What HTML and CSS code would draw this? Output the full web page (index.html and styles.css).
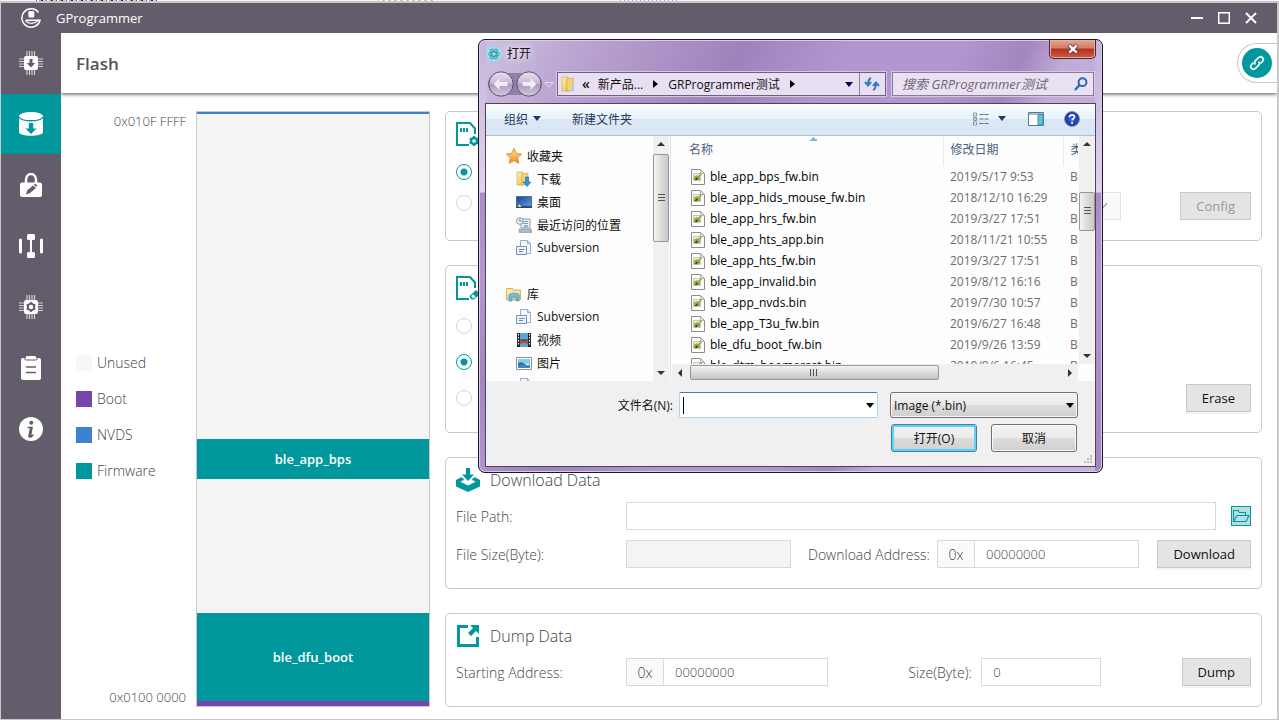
FILE: index.html
```html
<!DOCTYPE html>
<html lang="en">
<head>
<meta charset="utf-8">
<title>GProgrammer</title>
<link rel="stylesheet" href="styles.css">
</head>
<body>
<svg class="defs" aria-hidden="true">
  <defs>
    <linearGradient id="g-folder" x1="0" x2="1" y1="0" y2="1"><stop offset="0" stop-color="#fff3b8"/><stop offset="1" stop-color="#e6bd4c"/></linearGradient>
    <linearGradient id="g-blue" x1="0" x2="1" y1="0" y2="1"><stop offset="0" stop-color="#1c3f94"/><stop offset="1" stop-color="#5aa5ea"/></linearGradient>
    <linearGradient id="g-star" x1="0" x2="0" y1="0" y2="1"><stop offset="0" stop-color="#ffe79a"/><stop offset="1" stop-color="#f58a1f"/></linearGradient>
    <linearGradient id="g-orb" x1="0" x2="0" y1="0" y2="1"><stop offset="0" stop-color="#e9e2f0"/><stop offset=".5" stop-color="#c3b5d3"/><stop offset=".52" stop-color="#a99bbd"/><stop offset="1" stop-color="#d5cbe0"/></linearGradient>
    <radialGradient id="g-help"><stop offset="0" stop-color="#3f6be0"/><stop offset="1" stop-color="#16309c"/></radialGradient>
  </defs>
  <symbol id="i-file" viewBox="0 0 14 16"><path d="M.5.5h9l4 4v11H.5z" fill="#fdfdfd" stroke="#8d8d8d"/><path d="M9.500 1v3.500h3.500" fill="#e8e8e8" stroke="#a5a5a5" stroke-width=".8"/><path d="M2.500 4.500h7v7h-7z" fill="#eef2dc" stroke="#b5bda8" stroke-width=".8"/><path d="M3 7.500l3-1.500 3 2v3H3z" fill="#79c043"/><path d="M6 9.500l4.500-5" stroke="#c98a35" stroke-width="1.600"/><path d="M4.500 11l1.800-2" stroke="#333" stroke-width="1.500"/></symbol>
  <symbol id="i-svn" viewBox="0 0 16 16"><path d="M4.500.5h7l3 3v10h-10z" fill="#f4f8fd" stroke="#93add0"/><path d="M11.500.5v3h3" fill="none" stroke="#93add0"/><path d="M.5 6.500h10v8H.5z" fill="#edf3fb" stroke="#7890ba"/><path d="M3 9.500h5.500M3 11.500h4" stroke="#6c86b6"/></symbol>
  <symbol id="i-chip" viewBox="0 0 24 24"><path d="M8 0v24M10.500 0v24M13 0v24M15.500 0v24M0 8h24M0 10.500h24M0 13h24M0 15.500h24" stroke="#d2d0d5" stroke-width="1.200"/><rect x="5" y="5" width="14" height="14" rx="2" fill="#fff"/></symbol>
  <symbol id="i-card" viewBox="0 0 24 24"><path d="M13 23H1V1h13l5 5.500V12" fill="none" stroke="#00989d" stroke-width="2"/><path d="M5 6v4M8 6v4M11 6v4" stroke="#00989d" stroke-width="2"/></symbol>
</svg>

<div class="backdrop"></div>
<div class="app">
  <header class="titlebar">
    <svg class="logo" viewBox="0 0 20 20" fill="none" stroke="#fff"><path d="M17.500 4.500A9.200 9.200 0 1 0 19 12.300H5" stroke-width="1.500"/><path d="M4.500 12c1.500 4 9 4.500 12.500.6" stroke-width="1.200"/><rect x="7.300" y="3" width="6" height="6.500" rx="1.500" fill="#fff" stroke="none"/><circle cx="14.800" cy="1.800" r=".7" fill="#fff" stroke="none"/></svg>
    <h1 class="app-name">GProgrammer</h1>
    <div class="window-buttons">
      <button aria-label="Minimize"><svg viewBox="0 0 12 12"><path d="M0 6h12" stroke="#fff" stroke-width="2"/></svg></button>
      <button aria-label="Maximize"><svg viewBox="0 0 12 12"><path d="M.7.7h10.600v10.600H.7z" fill="none" stroke="#fff" stroke-width="1.500"/></svg></button>
      <button aria-label="Close"><svg viewBox="0 0 12 12"><path d="M1 1l10 10M11 1L1 11" stroke="#fff" stroke-width="2"/></svg></button>
    </div>
  </header>

  <div class="shell">
    <nav class="sidebar" aria-label="Tools">
      <button class="side-item" aria-label="Device"><svg viewBox="0 0 24 24"><use href="#i-chip"/><path d="M10.500 8h3v4h2.800L12 16.500 7.700 12h2.800z" fill="#635d6b"/></svg></button>
      <button class="side-item active" aria-label="Flash"><svg viewBox="0 0 24 24"><path d="M0 4v16c0 5 24 5 24 0V4z" fill="#fff"/><ellipse cx="12" cy="4.500" rx="12" ry="4.500" fill="#fff"/><path d="M0 5c2 5 22 5 24 0" fill="none" stroke="#00989d" stroke-width="1.300"/><path d="M9.800 11h4.400v5.500h3.300L12 22l-5.500-5.500h3.300z" fill="#00989d"/></svg></button>
      <button class="side-item" aria-label="Encrypt"><svg viewBox="0 0 24 24"><path d="M7 11V7c0-8 10-8 10 0v4" fill="none" stroke="#fff" stroke-width="2.500"/><rect x="1" y="9.500" width="22" height="14.500" rx="2" fill="#fff"/><path d="M7 21.500l1-4 6-5 3 2.500-6 5zM14.800 11.800l1.500-1 2 1.800-1 1.500z" fill="#635d6b"/></svg></button>
      <button class="side-item" aria-label="eFuse"><svg viewBox="0 0 24 24"><path d="M1.500 6v12M22.500 6v12" stroke="#fff" stroke-width="3" stroke-linecap="round"/><path d="M12 3v18" stroke="#fff" stroke-width="2"/><rect x="8" width="8" height="6" rx="1.500" fill="#fff"/><rect x="8" y="18" width="8" height="6" rx="1.500" fill="#fff"/></svg></button>
      <button class="side-item" aria-label="Chip configuration"><svg viewBox="0 0 24 24"><use href="#i-chip"/><circle cx="12" cy="12" r="3.200" fill="none" stroke="#635d6b" stroke-width="2"/><path d="M12 7v2M12 15v2M7.700 9.500l1.500 1M14.800 13.500l1.500 1M7.700 14.500l1.500-1M14.800 10.500l1.500-1" stroke="#635d6b" stroke-width="1.800"/></svg></button>
      <button class="side-item" aria-label="Log"><svg viewBox="0 0 24 24"><rect x="2" y="2" width="20" height="22" rx="2" fill="#fff"/><path d="M5.500 1v1.500q0 1.500 2 1.500h9q2 0 2-1.500V1" fill="none" stroke="#635d6b"/><rect x="7" width="10" height="3" rx="1" fill="#fff"/><path d="M7 11h10M7 16.500h10" stroke="#635d6b" stroke-width="1.700"/></svg></button>
      <button class="side-item" aria-label="About"><svg viewBox="0 0 24 24"><circle cx="12" cy="12" r="12" fill="#fff"/><circle cx="12.300" cy="5.800" r="2" fill="#635d6b"/><path d="M8.500 10.500h4.500l-1.500 8q.5 1 3-.8" fill="none" stroke="#635d6b" stroke-width="1.500"/><path d="M12.200 10.500L10.500 19q1 1 2.500-.3" fill="none" stroke="#635d6b" stroke-width="2.500"/></svg></button>
    </nav>

    <div class="workspace">
      <div class="page-head">
        <h2 class="page-title">Flash</h2>
        <div class="connect-tab"><button class="connect" aria-label="Connect"><svg viewBox="0 0 16 16" fill="none" stroke="#fff" stroke-width="1.700"><path d="M6.500 9.500c-1.500-1.500-1-3 .2-4.200L9.500 2.700c3-2.500 6.500 1 3.800 3.900L11.500 8.400"/><path d="M9.500 6.500c1.500 1.500 1 3-.2 4.200l-2.800 2.600c-3 2.500-6.500-1-3.800-3.900l1.800-1.800"/></svg></button></div>
      </div>

      <main class="content">
        <section class="legend-col" aria-label="Memory legend">
          <div class="addr">0x010F FFFF</div>
          <ul class="legend">
            <li><i class="swatch unused"></i>Unused</li>
            <li><i class="swatch boot"></i>Boot</li>
            <li><i class="swatch nvds"></i>NVDS</li>
            <li><i class="swatch firmware"></i>Firmware</li>
          </ul>
          <div class="addr">0x0100 0000</div>
        </section>
        <section class="flash-map" aria-label="Flash layout">
          <div class="nvds seg-nvds"></div>
          <div class="seg-free-top"></div>
          <div class="firmware seg-app">ble_app_bps</div>
          <div class="seg-free"></div>
          <div class="firmware seg-boot">ble_dfu_boot</div>
          <div class="boot seg-info"></div>
        </section>

        <div class="panels">
          <section class="panel">
            <div class="panel-head"><svg class="panel-icon" viewBox="0 0 24 24"><use href="#i-card"/><circle cx="18" cy="19" r="3" fill="none" stroke="#00989d" stroke-width="2.400"/><path d="M18 14v2M18 22v2M13.700 16.500l1.800 1M20.500 20.500l1.800 1M13.700 21.500l1.800-1M20.500 17.500l1.800-1" stroke="#00989d" stroke-width="2.200"/></svg></div>
            <div class="option-body">
              <div class="radios tight"><input type="radio" name="flash" aria-label="Internal" checked><input type="radio" name="flash" aria-label="External"></div>
              <div class="option-actions"><span class="select-wrap"><select disabled aria-label="Pin group"></select><svg viewBox="0 0 12 8"><path d="M1 1l5 6 5-6" fill="none" stroke="#aaa" stroke-width="1.200"/></svg></span><button class="btn" disabled>Config</button></div>
            </div>
          </section>

          <section class="panel">
            <div class="panel-head"><svg class="panel-icon" viewBox="0 0 24 24"><use href="#i-card"/><path d="M14 19.500l6-5.500 4 4-6 5.500h-2.500L13.500 21z" fill="#00989d"/><path d="M15 20l2-1.800 2.500 2.500-2 2z" fill="#fff"/></svg></div>
            <div class="option-body">
              <div class="radios"><input type="radio" name="erase" aria-label="Custom"><input type="radio" name="erase" aria-label="Firmware" checked><input type="radio" name="erase" aria-label="All"></div>
              <div class="option-actions"><button class="btn">Erase</button></div>
            </div>
          </section>

          <section class="panel">
            <div class="panel-head"><svg class="panel-icon" viewBox="0 0 24 24"><path d="M10 0h4v6.500h4L12 13 6 6.500h4z" fill="#00989d"/><path d="M5.500 9L0 12v6.500L12 24l12-5.500V12l-5.500-3-2.800 2.800 4 1.900L12 17.500l-7.700-3.800 4-1.900z" fill="#00989d"/></svg><h3>Download Data</h3></div>
            <div class="row"><label class="label" for="path">File Path:</label><input id="path" class="field grow" type="text"><button class="browse" aria-label="Browse"><svg viewBox="0 0 18 18" fill="none" stroke="#00989d" stroke-width="1.100"><path d="M1.500 14.500v-11h4.500l1.500 2h6v3M1.500 14.500l3.500-6h12l-3 6z"/></svg></button></div>
            <div class="row"><label class="label" for="fsize">File Size(Byte):</label><input id="fsize" class="field size" type="text" disabled><label class="label2" for="daddr">Download Address:</label><span class="addon">0x</span><input id="daddr" class="field hex" type="text" value="00000000"><button class="btn push">Download</button></div>
          </section>

          <section class="panel">
            <div class="panel-head"><svg class="panel-icon" viewBox="0 0 24 24"><path d="M12 2.500H2.500v19h19V13" fill="none" stroke="#00989d" stroke-width="3"/><path d="M14 1h9v9l-3-3-5 5-3-3 5-5z" fill="#00989d"/></svg><h3>Dump Data</h3></div>
            <div class="row"><label class="label" for="saddr">Starting Address:</label><span class="addon">0x</span><input id="saddr" class="field hex" type="text" value="00000000"><label class="label3" for="dsize">Size(Byte):</label><input id="dsize" class="field short" type="text" value="0"><button class="btn push">Dump</button></div>
          </section>
        </div>
      </main>
    </div>
  </div>
</div>

<section class="dialog" role="dialog" aria-labelledby="dlg-title" lang="zh-CN">
  <div class="dlg-title">
    <svg viewBox="0 0 16 16"><circle cx="8" cy="8" r="8" fill="#8fe3ee"/><g fill="none" stroke="#3b7f92" stroke-width=".8"><ellipse cx="8" cy="8" rx="5.500" ry="2.200"/><ellipse cx="8" cy="8" rx="5.500" ry="2.200" transform="rotate(60 8 8)"/><ellipse cx="8" cy="8" rx="5.500" ry="2.200" transform="rotate(120 8 8)"/></g></svg>
    <h2 id="dlg-title">打开</h2>
    <button class="dlg-close" aria-label="关闭"><svg viewBox="0 0 12 10"><path d="M2 1l8 8M10 1L2 9" stroke="#4c3a46" stroke-width="4"/><path d="M2.300 1.300l7.400 7.400M9.700 1.300L2.300 8.700" stroke="#fff" stroke-width="2.400"/></svg></button>
  </div>
  <div class="dlg-nav">
    <svg class="orbs" viewBox="0 0 66 26"><rect x="0" y="2" width="54" height="22" rx="11" fill="#8f80a6"/><circle cx="13" cy="13" r="12.200" fill="url(#g-orb)" stroke="#5c5070"/><circle cx="41" cy="13" r="12.200" fill="url(#g-orb)" stroke="#5c5070"/><path d="M5.500 13l6-6v4h8v4h-8v4z" fill="#f0ebf5"/><path d="M48.500 13l-6-6v4h-8v4h8v4z" fill="#f0ebf5"/><path d="M57 11.500h8l-4 4.500z" fill="#b9a8cc" stroke="#efe8f6" stroke-width=".8"/></svg>
    <div class="address">
      <svg class="ico16" viewBox="0 0 16 16"><path d="M2 1h6v14H2z" fill="url(#g-folder)" stroke="#cfa63e" stroke-width=".6"/><path d="M7 3l6-1v12l-6 1.500z" fill="#f2d476" stroke="#c99d35" stroke-width=".6"/><path d="M12 9h2v6l-3 .5z" fill="#a9cbe6"/></svg>
      <span class="crumb-back">«</span><span>新产品...</span><i class="tri-right"></i><span>GRProgrammer测试</span><i class="tri-right"></i>
      <i class="tri-down navy"></i>
      <button class="refresh" aria-label="刷新"><svg class="ico16" viewBox="0 0 16 16" fill="none" stroke="#2e7ccc" stroke-width="2"><path d="M7 2Q4 3 4 9M1 6l3 3.500L7 6M9 14q3-1 3-7M9 10l3-3.500 3 3.500"/></svg></button>
    </div>
    <div class="search"><input type="text" aria-label="搜索" placeholder="搜索 GRProgrammer测试"><svg viewBox="0 0 14 14" fill="none" stroke="#2f66b4" stroke-width="2"><circle cx="8.500" cy="5.200" r="3.900"/><path d="M5.500 8L1 13" stroke-width="2.400"/></svg></div>
  </div>

  <div class="client">
    <div class="toolbar">
      <button class="tool">组织<i class="tri-down"></i></button>
      <button class="tool">新建文件夹</button>
      <span class="tool-icons">
        <button aria-label="视图"><svg class="ico16" viewBox="0 0 16 14"><path d="M.5 1h3v3h-3zM.5 5.500h3v3h-3zM.5 10h3v3h-3z" fill="#eef3f8" stroke="#8795a8"/><path d="M6.500 2.500h4M11.500 2.500h4M6.500 7h4M11.500 7h4M6.500 11.500h4M11.500 11.500h4" stroke="#5b6f8c"/><path d="M1.500 7h1" stroke="#c33"/></svg></button>
        <button aria-label="更多选项"><i class="tri-down"></i></button>
        <button aria-label="预览窗格"><svg class="ico16" viewBox="0 0 16 14"><path d="M.5.5h15v13H.5z" fill="#fff" stroke="#56789c"/><path d="M1 2h14" stroke="#56789c"/><path d="M10 2.500h5V13h-5z" fill="#62c0da" stroke="#3c8fae"/></svg></button>
        <button aria-label="帮助"><svg class="ico16" viewBox="0 0 16 16"><circle cx="8" cy="8" r="7.500" fill="url(#g-help)" stroke="#8f97a8"/><path d="M5.500 6.200C5.500 3 10.800 3.200 10.500 6c-.2 1.500-2.400 1.800-2.400 3.600M8.100 11v1.800" fill="none" stroke="#fff" stroke-width="1.800"/></svg></button>
      </span>
    </div>

    <div class="panes">
      <ul class="tree">
        <li><svg viewBox="0 0 16 16"><path d="M8 .5l2.300 5 5.200.6-3.900 3.700 1.100 5.500L8 12.500l-4.700 2.800 1.100-5.500L.5 6.100l5.200-.6z" fill="url(#g-star)" stroke="#d9791a" stroke-width=".8"/></svg>收藏夹</li>
        <li class="sub"><svg viewBox="0 0 16 16"><path d="M1 1h6v13H1z" fill="url(#g-folder)" stroke="#cfa63e" stroke-width=".6"/><path d="M6 3l6-1v11l-6 1.500z" fill="#f2d476" stroke="#c99d35" stroke-width=".6"/><path d="M9.500 6h3v5H15l-4 4.500L7 11h2.500z" fill="#2f95dc" stroke="#1b65a5" stroke-width=".6"/></svg>下载</li>
        <li class="sub"><svg viewBox="0 0 16 16"><path d="M.5 2.500h15v11H.5z" fill="url(#g-blue)" stroke="#4d6d9d"/><path d="M0 12h16v2H0z" fill="#274878"/><path d="M1.500 13l2-3 2 3z" fill="#ffd34c"/></svg>桌面</li>
        <li class="sub"><svg viewBox="0 0 16 16"><path d="M5 2h9v9H5z" fill="#e9eff3" stroke="#8fa0ac"/><path d="M7 4.500h5M7 6.500h5" stroke="#6da9c9"/><path d="M8 8h4v3H8z" fill="#7cc0dc"/><path d="M3 12h12l1 3.500H3z" fill="#aeb9c0" stroke="#82909a" stroke-width=".6"/><circle cx="3.800" cy="4" r="3.300" fill="#f7f7f7" stroke="#8b9298"/><path d="M3.800 2v2.200h1.700" fill="none" stroke="#555" stroke-width=".8"/></svg>最近访问的位置</li>
        <li class="sub"><svg viewBox="0 0 16 16"><use href="#i-svn"/></svg>Subversion</li>
        <li class="gap" aria-hidden="true"></li>
        <li><svg viewBox="0 0 16 16"><path d="M.5 2.500h6l1 1.500h7v10H.5z" fill="url(#g-folder)" stroke="#cfa63e" stroke-width=".8"/><path d="M3 9q5-5 10 0v6h-3v-4H6v4H3z" fill="#6dbbe6" stroke="#3c8cc0" stroke-width=".6"/><path d="M.5 6h14" stroke="#fff3b8"/></svg>库</li>
        <li class="sub"><svg viewBox="0 0 16 16"><use href="#i-svn"/></svg>Subversion</li>
        <li class="sub"><svg viewBox="0 0 16 16"><path d="M1 1h14v14H1z" fill="#222"/><path d="M4 1h8v14H4z" fill="#56a7da"/><path d="M4 9l4-2 4 2v3l-4-1-4 1z" fill="#bb4c39"/><path d="M4 8h8" stroke="#223a55"/><path d="M2.500 2v12M13.500 2v12" stroke="#fff" stroke-width="1.200" stroke-dasharray="1.500 1.500"/></svg>视频</li>
        <li class="sub"><svg viewBox="0 0 16 16"><path d="M.5 2.500h15v12H.5z" fill="#fff" stroke="#8b9297"/><path d="M2 4h12v5H2z" fill="#7fd0f2"/><path d="M2 8q4-2 7 1t5 0v4H2z" fill="#2c7d7c"/><path d="M2 11q6-2 12 0v2H2z" fill="#3f86c8"/></svg>图片</li>
        <li class="sub"><svg viewBox="0 0 16 16"><use href="#i-svn"/></svg></li>
      </ul>
      <div class="vbar tree-bar" aria-hidden="true"><i class="arrow up"></i><b class="thumb"></b><i class="arrow down"></i></div>

      <div class="list-area">
        <div class="list-main">
          <div class="file-scroll">
            <table class="files">
              <colgroup><col class="c-name"><col class="c-date"><col class="c-type"></colgroup>
              <thead><tr><th class="sorted">名称</th><th>修改日期</th><th>类型</th></tr></thead>
              <tbody>
                <tr><td><svg><use href="#i-file"/></svg>ble_app_bps_fw.bin</td><td>2019/5/17 9:53</td><td>BIN</td></tr>
                <tr><td><svg><use href="#i-file"/></svg>ble_app_hids_mouse_fw.bin</td><td>2018/12/10 16:29</td><td>BIN</td></tr>
                <tr><td><svg><use href="#i-file"/></svg>ble_app_hrs_fw.bin</td><td>2019/3/27 17:51</td><td>BIN</td></tr>
                <tr><td><svg><use href="#i-file"/></svg>ble_app_hts_app.bin</td><td>2018/11/21 10:55</td><td>BIN</td></tr>
                <tr><td><svg><use href="#i-file"/></svg>ble_app_hts_fw.bin</td><td>2019/3/27 17:51</td><td>BIN</td></tr>
                <tr><td><svg><use href="#i-file"/></svg>ble_app_invalid.bin</td><td>2019/8/12 16:16</td><td>BIN</td></tr>
                <tr><td><svg><use href="#i-file"/></svg>ble_app_nvds.bin</td><td>2019/7/30 10:57</td><td>BIN</td></tr>
                <tr><td><svg><use href="#i-file"/></svg>ble_app_T3u_fw.bin</td><td>2019/6/27 16:48</td><td>BIN</td></tr>
                <tr><td><svg><use href="#i-file"/></svg>ble_dfu_boot_fw.bin</td><td>2019/9/26 13:59</td><td>BIN</td></tr>
                <tr><td><svg><use href="#i-file"/></svg>ble_dtm_boomerast.bin</td><td>2019/8/6 16:45</td><td>BIN</td></tr>
              </tbody>
            </table>
          </div>
          <div class="vbar list-bar" aria-hidden="true"><i class="arrow up"></i><b class="thumb"></b><i class="arrow down"></i></div>
        </div>
        <div class="hbar" aria-hidden="true"><i class="arrow left"></i><b class="thumb"></b><i class="arrow right"></i></div>
      </div>
    </div>

    <div class="footer">
      <div class="footer-row">
        <label for="fname">文件名(N):</label>
        <span class="combo"><input id="fname" type="text"><i class="tri-down black"></i><i class="caret"></i></span>
        <span class="filter"><select aria-label="文件类型"><option>Image (*.bin)</option></select><i class="tri-down black"></i></span>
      </div>
      <div class="footer-row buttons"><button class="win-btn primary">打开(O)</button><button class="win-btn">取消</button></div>
      <svg class="grip" viewBox="0 0 8 8"><path d="M6 0h2v2H6zM3 3h2v2H3zM6 3h2v2H6zM0 6h2v2H0zM3 6h2v2H3zM6 6h2v2H6z" fill="#bbb"/></svg>
    </div>
  </div>
</section>
</body>
</html>
```
FILE: styles.css
```css
* { box-sizing: border-box; }
body { margin: 0; min-height: 100vh; display: flex; flex-direction: column; font-family: "Open Sans", "Noto Sans CJK SC", sans-serif; font-size: 13px; font-weight: 300; color: #444; background: #fff; }
h1, h2, h3, ul { margin: 0; padding: 0; font-weight: inherit; font-size: inherit; }
ul { list-style: none; }
button, input, select { font: inherit; color: inherit; margin: 0; border-radius: 0; }
button { padding: 0; border: 0; background: none; }
svg { display: block; flex: none; }
.defs { position: absolute; width: 0; height: 0; }

.backdrop { height: 1px; background: repeating-linear-gradient(90deg, #46618f 0 1px, #fff 1px 3px, #d9a25d 3px 5px, #332d52 5px 7px, #b8cfe8 7px 10px) 36px 0 / 121px 1px no-repeat, repeating-linear-gradient(90deg, #dfc290 0 1px, #fff 1px 4px, #dfc290 4px 6px) 378px 0 / 58px 1px no-repeat, repeating-linear-gradient(90deg, #8fa6cc 0 1px, #fff 1px 4px) 620px 0 / 60px 1px no-repeat, #f4f6f8; }
.app { flex: 1; display: flex; flex-direction: column; border: 1px solid #c8c8c8; border-width: 2px 2px 1px 1px; }

.titlebar { height: 30px; display: flex; align-items: center; padding: 0 20px; background: #635d6b; color: #fff; }
.logo { width: 20px; height: 20px; margin-right: 15px; }
.app-name { font-size: 13px; font-weight: 400; }
.window-buttons { margin-left: auto; display: flex; gap: 15px; }
.window-buttons svg { width: 12px; height: 12px; }

.shell { flex: 1; display: flex; }
.sidebar { width: 60px; background: #635d6b; display: flex; flex-direction: column; gap: 1px; }
.side-item { height: 60px; display: flex; align-items: center; justify-content: center; }
.side-item.active { background: #00989d; }
.side-item svg { width: 24px; height: 24px; }

.workspace { flex: 1; display: flex; flex-direction: column; }
.page-head { height: 60px; padding-left: 15px; display: flex; align-items: center; justify-content: space-between; box-shadow: 0 1px 4px rgba(0, 0, 0, .7); clip-path: inset(0 0 -8px 0); }
.page-title { font-size: 17px; font-weight: 600; color: #555; }
.connect-tab { padding: 4px 5px 4px 4px; border: 1px solid #c8c8c8; border-right: 0; border-radius: 20px 0 0 20px; }
.connect { width: 30px; height: 30px; border-radius: 50%; background: #00989d; display: flex; align-items: center; justify-content: center; }
.connect svg { width: 16px; height: 16px; }

.content { flex: 1; display: flex; padding: 18px 15px 12px; }
.legend-col { width: 120px; display: flex; flex-direction: column; justify-content: space-between; }
.addr { padding-right: 10px; text-align: right; line-height: 20px; }
.legend { display: flex; flex-direction: column; gap: 16px; margin-top: 16px; font-size: 14px; }
.legend li { display: flex; align-items: center; gap: 5px; line-height: 20px; }
.swatch { width: 16px; height: 16px; }
.unused { background: #f7f7f7; }
.boot { background: #7844b0; }
.nvds { background: #3e80d2; }
.firmware { background: #00989d; }

.flash-map { width: 234px; margin-right: 15px; border: 1px solid #c8c8c8; background: #f4f4f4; display: flex; flex-direction: column; color: #fff; font-weight: 600; }
.seg-nvds { height: 2px; }
.seg-free-top { flex: 325; }
.seg-free { flex: 134; }
.seg-app, .seg-boot { display: flex; align-items: center; justify-content: center; }
.seg-app { height: 40px; }
.seg-boot { height: 88px; }
.seg-info { height: 5px; }

.panels { flex: 1; display: flex; flex-direction: column; justify-content: space-between; gap: 24px; }
.panel { border: 1px solid #c8c8c8; border-radius: 5px; padding: 10px 10px 20px; display: flex; flex-direction: column; gap: 10px; }
.panel-head { display: flex; align-items: center; gap: 10px; height: 24px; }
.panel-head h3 { font-size: 16px; }
.panel-icon { width: 24px; height: 24px; }
.option-body { display: flex; justify-content: space-between; padding-top: 8px; }
.radios { display: flex; flex-direction: column; gap: 20px; padding-bottom: 6px; }
.radios.tight { gap: 15px; padding-bottom: 9px; }
.radios input { appearance: none; width: 16px; height: 16px; border: 1px solid #d5d5d5; border-radius: 50%; background: #fff; }
.radios input:checked { border-color: #00989d; background: radial-gradient(circle, #00989d 3px, #fff 4px); }
.option-actions { align-self: flex-end; display: flex; gap: 59px; }
.select-wrap { position: relative; }
.select-wrap select { appearance: none; width: 165px; height: 28px; border: 1px solid #d9d9d9; background: #f7f7f7; }
.select-wrap svg { position: absolute; right: 13px; top: 10px; width: 12px; height: 8px; }

.row { display: flex; align-items: center; min-height: 28px; font-size: 14px; }
.label { width: 170px; }
.label2 { width: 129px; margin-left: 17px; }
.label3 { width: 73px; margin-left: auto; }
.field { height: 28px; border: 1px solid #d9d9d9; background: #fff; padding: 0 11px; font-size: 13px; outline: 0; min-width: 0; }
.field:disabled { background: #f4f4f4; }
.grow { flex: 1; }
.size, .hex { width: 165px; }
.short { width: 120px; }
.addon { width: 37px; height: 28px; border: 1px solid #d9d9d9; border-right: 0; border-radius: 2px 0 0 2px; background: #fafafa; display: flex; align-items: center; justify-content: center; }
.browse { width: 20px; height: 20px; margin-left: 15px; border: 1px solid #00989d; background: #b2dfe0; }
.btn { height: 28px; padding: 0 15px; border: 1px solid #c8c8c8; background: #e4e4e4; box-shadow: 0 2px 0 #f4f4f4; color: #111; font-size: 13px; font-weight: 400; }
.btn:disabled { color: #999; box-shadow: none; }
.push { margin-left: auto; }

.dialog { position: absolute; left: 478px; top: 39px; width: 625px; padding: 0 6px 5px; border: 1px solid #1d1626; border-radius: 7px; font-size: 12px; font-weight: 400; color: #111; box-shadow: inset 0 0 0 1px #d9cbe8;
  background: linear-gradient(#c6b4db 0, #e0d3ee 152px, #a98bc8 153px, #b497d1 240px, #a385bf 330px, #b194ce 100%) left / 7px 100% no-repeat, linear-gradient(#c3b2d9 0, #e0d3ee 152px, #a98bc8 153px, #b497d1 240px, #a385bf 100%) right / 7px 100% no-repeat, linear-gradient(115deg, #d0c2e1 0, #bba5d3 90px, #9f82bb 240px, #b196cf 340px, #b196cf 440px, #a286be 500px, #c0acd6 540px, #c6b5db 100%); }
.dlg-title { display: flex; align-items: center; gap: 5px; height: 28px; padding-left: 1px; }
.dlg-title svg { width: 16px; height: 16px; }
.dlg-title h2 { padding-bottom: 3px; font-size: 12px; text-shadow: 0 0 8px #fff, 0 0 8px #fff; }
.dlg-close { width: 47px; height: 19px; margin-left: auto; align-self: flex-start; border: 1px solid #4a2430; border-top: 0; border-radius: 0 0 5px 5px; background: linear-gradient(#e6a493, #d37a68 45%, #b32f20 50%, #cf5a42); box-shadow: inset 0 0 0 1px #e9aea0; display: flex; align-items: center; justify-content: center; }
.dlg-title .dlg-close svg { width: 12px; height: 10px; }
.dlg-nav { display: flex; align-items: center; padding: 3px 2px 6px 3px; height: 35px; }
.orbs { width: 66px; height: 26px; margin-right: 3px; }
.address { flex: 1; display: flex; align-items: center; height: 24px; border: 1px solid #6f5f80; box-shadow: 0 0 0 1px #d6c7e5; background: #e9dff2; padding-left: 2px; white-space: nowrap; }
.ico16 { width: 16px; height: 16px; }
.crumb-back { margin: 0 8px 0 6px; font-size: 14px; font-weight: 600; line-height: 16px; }
.tri-right { border: 4px solid transparent; border-left: 5px solid #000; border-right: 0; margin: 0 10px; }
.tri-down { border: 4px solid transparent; border-top: 5px solid #1f3a66; border-bottom: 0; }
.tri-down.navy { border-top-color: #00005c; margin: 0 6px 0 auto; }
.tri-down.black { border-top-color: #000; }
.refresh { height: 22px; padding: 0 5px 0 4px; border-left: 1px solid #8d7aa3; }
.search { width: 202px; height: 24px; margin-left: 6px; display: flex; align-items: center; padding: 0 5px 0 9px; border: 1px solid #8d7aa3; box-shadow: 0 0 0 1px #d6c7e5; background: #eae1f3; }
.search input { flex: 1; min-width: 0; padding: 0; border: 0; outline: 0; background: none; font-size: 13px; font-style: italic; }
.search input::placeholder { color: #6d6675; opacity: 1; }
.search svg { width: 14px; height: 14px; }

.client { border: 1px solid #4d4459; background: #f0f0f0; }
.toolbar { height: 32px; display: flex; align-items: center; gap: 31px; padding: 0 15px 2px 18px; background: linear-gradient(#fafdff, #e9f2fb 48%, #dce7f5 50%, #dce7f5); border-bottom: 1px solid #a9bfd9; color: #1e395b; }
.tool { display: flex; align-items: center; gap: 5px; }
.tool-icons { margin-left: auto; display: flex; align-items: center; gap: 20px; }
.tool-icons button:nth-child(2) { margin: 0 2px 0 -11px; }
.tool-icons .tri-down { display: block; }

.panes { display: flex; height: 245px; background: #fdfdfd; }
.tree { width: 167px; padding: 8px 0 0 20px; overflow: hidden; white-space: nowrap; }
.tree li { display: flex; align-items: center; gap: 5px; height: 23px; }
.tree .sub { padding-left: 10px; }
.tree svg { width: 16px; height: 16px; }
.vbar { width: 16px; display: flex; flex-direction: column; align-items: center; background: #f0f0f0; padding: 6px 0; }
.arrow { flex: none; border: 4px solid transparent; }
.arrow.up { border-top: 0; border-bottom: 4px solid #333; }
.arrow.down { border-bottom: 0; border-top: 4px solid #333; margin-top: auto; }
.arrow.left { border-left: 0; border-right: 4px solid #333; }
.arrow.right { border-right: 0; border-left: 4px solid #333; margin-left: auto; }
.thumb { width: 16px; border: 1px solid #979797; border-radius: 2px; background: repeating-linear-gradient(#555 0 1px, transparent 1px 3px) center / 7px 9px no-repeat, linear-gradient(90deg, #f4f4f4, #dcdcdc 50%, #c9c9cd); }
.tree-bar .thumb { height: 88px; margin-top: 8px; }
.list-bar .thumb { height: 39px; margin-top: 46px; }
.list-area { flex: 1; min-width: 0; display: flex; flex-direction: column; margin-left: 1px; border-left: 1px solid #d6e5f5; padding-left: 1px; }
.list-main { height: 228px; display: flex; }
.file-scroll { flex: 1; min-width: 0; margin-right: 1px; overflow: hidden; }
.files { table-layout: fixed; width: 450px; border-collapse: collapse; }
.c-name { width: 271px; }
.c-date { width: 120px; }
.files th { height: 30px; padding: 0 0 4px 7px; border-left: 1px solid #e3edf7; text-align: left; font-weight: 400; color: #4c607a; }
.files th.sorted { padding-left: 17px; border-left: 0; background: conic-gradient(from 135deg at 50% 0, #7fb9d0 90deg, transparent 0) 138px 1px / 8px 4px no-repeat; }
.files td { height: 21px; padding: 0 0 0 7px; line-height: 21px; white-space: nowrap; color: #6d6d6d; }
.files td:first-child { padding-left: 19px; display: flex; align-items: center; gap: 5px; color: #000; }
.files td svg { width: 14px; height: 16px; }
.hbar { height: 17px; margin-right: 17px; padding: 0 6px; display: flex; align-items: center; background: #f0f0f0; }
.hbar .thumb { width: 249px; height: 15px; margin-left: 8px; background: repeating-linear-gradient(90deg, #555 0 1px, transparent 1px 3px) center / 9px 7px no-repeat, linear-gradient(#f4f4f4, #dcdcdc 50%, #c4c4c8); }

.footer { position: relative; display: flex; flex-direction: column; gap: 6px; padding: 11px 17px 14px; }
.footer-row { display: flex; align-items: center; justify-content: flex-end; }
.combo { position: relative; display: flex; width: 199px; height: 26px; margin: 0 12px 0 6px; }
.combo input { width: 100%; border: 1px solid #b3d3ec; border-top-color: #3c7fb1; border-radius: 2px; background: #fff; outline: 0; }
.combo .tri-down, .filter .tri-down { position: absolute; right: 4px; top: 11px; pointer-events: none; }
.caret { position: absolute; left: 4px; top: 5px; width: 1px; height: 17px; background: #000; }
.filter { position: relative; width: 188px; }
.filter select, .win-btn { border: 1px solid #707070; border-radius: 3px; background: linear-gradient(#f2f2f2, #ebebeb 48%, #dddddd 50%, #cfcfcf); box-shadow: inset 0 0 0 1px #fafafa; }
.filter select { appearance: none; width: 100%; height: 26px; padding: 0 3px; display: block; }
.buttons { gap: 14px; padding-right: 1px; }
.win-btn { width: 86px; height: 28px; }
.primary { border-color: #3c7fb1; box-shadow: inset 0 0 0 2px #5fd3f5; }
.grip { position: absolute; right: 3px; bottom: 3px; width: 8px; height: 8px; }
```
